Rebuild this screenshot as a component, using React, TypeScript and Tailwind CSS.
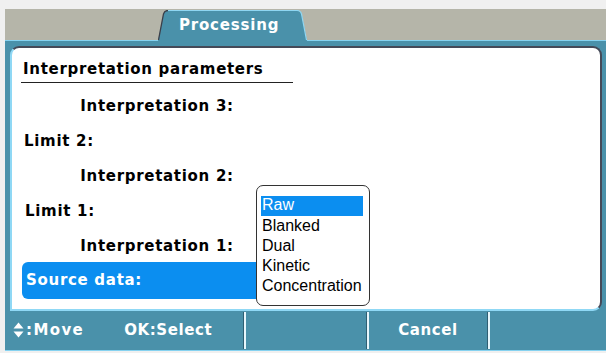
import React from "react";

const font = { fontFamily: '"DejaVu Sans", Verdana, sans-serif' };

function Tab() {
  return (
    <div className="relative z-10 ml-[153px] -mb-[1px] h-[31px] w-[149px]">
      <svg className="absolute inset-0" width="149" height="31" viewBox="0 0 149 31">
        <path d="M0,31 L5.5,4 Q6.5,0.5 10,0.5 L139,0.5 Q142.5,0.5 143.5,4 L149,31 Z" fill="#4a91aa" />
        <path d="M0.5,30 L5.5,4 Q6.5,0.5 10,0.5" fill="none" stroke="#3b3f4a" strokeWidth="1.3" />
        <path d="M10,0.5 L139,0.5 Q142.5,0.5 143.5,4 L148.5,30" fill="none" stroke="#8fd6f2" strokeWidth="1.2" />
      </svg>
      <div className="relative flex h-[30px] items-center pl-[21px] text-[15px] font-bold leading-none tracking-[0.8px] text-white">
        Processing
      </div>
    </div>
  );
}

function UpDown() {
  return (
    <svg width="11" height="17" viewBox="0 0 11 17" className="mr-[2px]">
      <path d="M5.5,0.5 L10.5,6.5 L0.5,6.5 Z" fill="white" />
      <path d="M0.5,9.5 L10.5,9.5 L5.5,15.5 Z" fill="white" />
    </svg>
  );
}

function Sep() {
  return (
    <div className="flex h-[37px] self-center">
      <div className="w-[1px] bg-[#2f5f73]" />
      <div className="w-[2px] bg-[#e6f6fc]" />
    </div>
  );
}

export default function App() {
  const rowCls = "flex h-[35px] items-center";
  return (
    <div className="h-[353px] w-[606px] overflow-hidden bg-[#f0f0f0] pl-[5px] pt-[9px]" style={font}>
      <div className="flex h-[31px] items-end bg-[#b5b5a9]">
        <Tab />
      </div>
      <div className="flex h-[311px] flex-col border-b-[1px] border-t-[1px] border-[#86d2f0] bg-[#4a91aa]">
        <div className="relative ml-[5px] mr-[4px] mt-[5px] h-[265px] rounded-tl-[9px] rounded-tr-[9px] rounded-br-[9px] border-b-2 border-l-2 border-r-2 border-t-2 border-b-[#8fd8f5] border-l-[#8fd8f5] border-r-[#454a58] border-t-[#454a58] bg-white pl-[9px]">
          <div className="w-[272px] border-b-[1px] border-[#222] pb-[3px] pl-[2px] pt-[11px] text-[15px] font-bold leading-[20px] tracking-[0.7px] text-black">
            Interpretation parameters
          </div>
          <div className="mt-[6px] text-[15px] font-bold tracking-[0.7px] text-black">
            <div className={rowCls + " w-[272px] justify-center"}>Interpretation 3:</div>
            <div className={rowCls + " pl-[3px]"}>Limit 2:</div>
            <div className={rowCls + " w-[272px] justify-center"}>Interpretation 2:</div>
            <div className={rowCls + " pl-[4px]"}>Limit 1:</div>
            <div className={rowCls + " w-[272px] justify-center"}>Interpretation 1:</div>
            <div className="-mt-[2px] ml-[1px] flex h-[37px] w-[242px] items-center rounded-[6px] bg-[#0b8ef0] pl-[4px] text-white">
              Source data:
            </div>
          </div>
          <div
            className="absolute left-[244px] top-[137px] w-[114px] rounded-[7px] border border-[#333] bg-white pb-[9px] pl-[4px] pr-[6px] pt-[10px] text-[16px] leading-[20px] text-black"
            style={{ fontFamily: '"Liberation Sans", Arial, sans-serif' }}
          >
            <div className="h-[20px] bg-[#0b8ef0] pl-[1px] leading-[18px] text-white">Raw</div>
            <div className="pl-[1px]">Blanked</div>
            <div className="pl-[1px]">Dual</div>
            <div className="pl-[1px]">Kinetic</div>
            <div className="pl-[1px]">Concentration</div>
          </div>
        </div>
        <div className="flex flex-1 items-center text-[15px] font-bold leading-none tracking-[0.6px] text-white">
          <div className="flex w-[238px] items-center pl-[8px]">
            <UpDown />
            <span className="tracking-[1.4px]">:Move</span>
            <span className="ml-[40px]">OK:Select</span>
          </div>
          <Sep />
          <div className="w-[120px]" />
          <Sep />
          <div className="flex w-[118px] justify-center">Cancel</div>
          <Sep />
        </div>
      </div>
    </div>
  );
}
